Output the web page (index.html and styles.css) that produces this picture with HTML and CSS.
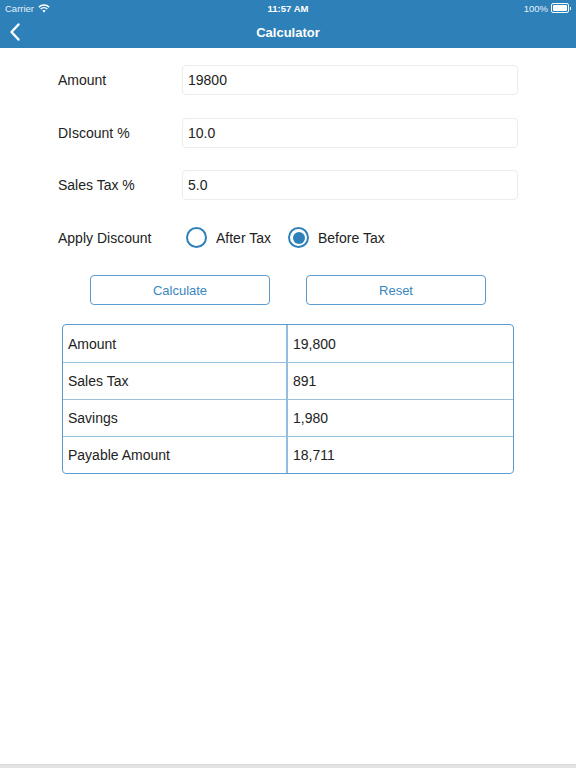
FILE: index.html
```html
<!DOCTYPE html>
<html lang="en">
<head>
    <meta charset="UTF-8">
    <meta name="viewport" content="width=device-width, initial-scale=1.0">
    <title>Calculator</title>
    <link rel="stylesheet" href="styles.css">
</head>
<body>
    <div class="screen">
        <div class="header">
            <div class="status-bar">
                <div class="status-left">
                    Carrier
                    <svg class="wifi" width="12" height="9" viewBox="0 0 12 9">
                        <path d="M6 8.6 L4.3 6.8 A2.5 2.5 0 0 1 7.7 6.8 Z" fill="#fff"/>
                        <path d="M2.6 5.1 A4.9 4.9 0 0 1 9.4 5.1" stroke="#fff" stroke-width="1.4" fill="none"/>
                        <path d="M0.8 3.2 A7.4 7.4 0 0 1 11.2 3.2" stroke="#fff" stroke-width="1.4" fill="none"/>
                    </svg>
                </div>
                <div class="status-time">11:57 AM</div>
                <div class="status-right">
                    100%
                    <span class="battery"><span class="battery-fill"></span></span>
                    <span class="battery-nub"></span>
                </div>
            </div>
            <div class="nav-bar">
                <svg class="back" width="12" height="18" viewBox="0 0 12 18">
                    <path d="M9.5 1.5 L2.5 9 L9.5 16.5" stroke="#fff" stroke-width="2.4" fill="none" stroke-linecap="round" stroke-linejoin="round"/>
                </svg>
                <div class="nav-title">Calculator</div>
            </div>
        </div>

        <div class="content">
            <div class="form-row">
                <label class="form-label">Amount</label>
                <input class="form-input" type="text" value="19800">
            </div>
            <div class="form-row">
                <label class="form-label">DIscount %</label>
                <input class="form-input" type="text" value="10.0">
            </div>
            <div class="form-row">
                <label class="form-label">Sales Tax %</label>
                <input class="form-input" type="text" value="5.0">
            </div>
            <div class="form-row">
                <label class="form-label">Apply Discount</label>
                <div class="radio-group">
                    <div class="radio-item">
                        <span class="radio"></span>
                        After Tax
                    </div>
                    <div class="radio-item">
                        <span class="radio checked"></span>
                        Before Tax
                    </div>
                </div>
            </div>

            <div class="buttons">
                <button class="btn">Calculate</button>
                <button class="btn">Reset</button>
            </div>

            <table class="results">
                <tr><td>Amount</td><td>19,800</td></tr>
                <tr><td>Sales Tax</td><td>891</td></tr>
                <tr><td>Savings</td><td>1,980</td></tr>
                <tr><td>Payable Amount</td><td>18,711</td></tr>
            </table>
        </div>

        <div class="bottom-bar"></div>
    </div>
</body>
</html>
```

FILE: styles.css
```css
body {
    margin: 0;
    font-family: "Liberation Sans", Arial, sans-serif;
    color: #222;
    background: #fff;
}
.screen {
    height: 768px;
    display: flex;
    flex-direction: column;
}
.header {
    background-color: #2e80b9;
    color: #fff;
}
.status-bar {
    height: 16px;
    display: flex;
    align-items: center;
    justify-content: space-between;
    padding: 0 5px;
    font-size: 9.5px;
}
.status-left {
    display: flex;
    align-items: center;
    gap: 4px;
    width: 120px;
    color: #e6f0f8;
}
.status-time {
    font-weight: bold;
}
.status-right {
    width: 120px;
    display: flex;
    align-items: center;
    justify-content: flex-end;
    color: #e6f0f8;
}
.battery {
    display: inline-block;
    width: 14px;
    height: 6px;
    border: 1px solid #fff;
    border-radius: 2px;
    margin-left: 3px;
    padding: 1px;
}
.battery-fill {
    display: block;
    width: 100%;
    height: 100%;
    background: #fff;
    border-radius: 1px;
}
.battery-nub {
    display: inline-block;
    width: 1px;
    height: 3px;
    background: #fff;
    margin-left: 1px;
}
.nav-bar {
    height: 32px;
    position: relative;
    display: flex;
    align-items: center;
    justify-content: center;
}
.back {
    position: absolute;
    left: 9px;
    top: 7px;
}
.nav-title {
    font-size: 13px;
    font-weight: bold;
}
.content {
    flex: 1;
    padding: 17px 58px 0 58px;
}
.form-row {
    display: flex;
    align-items: center;
    height: 30px;
    margin-bottom: 22.5px;
}
.form-label {
    width: 124px;
    font-size: 14px;
    flex-shrink: 0;
}
.form-input {
    flex: 1;
    height: 30px;
    box-sizing: border-box;
    border: 1px solid #ececec;
    border-radius: 4px;
    padding: 0 5px;
    font-family: inherit;
    font-size: 14px;
    color: #222;
    outline: none;
}
.radio-group {
    display: flex;
    align-items: center;
    margin-left: 4px;
    gap: 17px;
    font-size: 14px;
}
.radio-item {
    display: flex;
    align-items: center;
    gap: 9px;
}
.radio {
    width: 21px;
    height: 21px;
    box-sizing: border-box;
    border: 2.5px solid #2e80b9;
    border-radius: 50%;
    padding: 2.5px;
}
.radio.checked::after {
    content: "";
    display: block;
    width: 100%;
    height: 100%;
    border-radius: 50%;
    background: #2e80b9;
}
.buttons {
    display: flex;
    justify-content: center;
    gap: 36px;
    margin-top: 0;
    margin-bottom: 19px;
}
.btn {
    width: 180px;
    height: 30px;
    background: #fff;
    border: 1px solid #5c9bcf;
    border-radius: 4px;
    color: #3a86c0;
    font-family: inherit;
    font-size: 13px;
}
.results {
    width: 452px;
    margin: 0 auto;
    border-collapse: separate;
    border-spacing: 0;
    border: 1px solid #5c9bcf;
    border-radius: 4px;
    font-size: 14px;
}
.results td {
    width: 50%;
    height: 37px;
    padding: 0 5px;
    border-top: 1px solid #9cc2e2;
    box-sizing: border-box;
}
.results tr:first-child td {
    border-top: none;
}
.results td:first-child {
    border-right: 2px solid #93bcdf;
}
.bottom-bar {
    height: 3px;
    background: #e4e4e6;
    border-top: 1px solid #d9d9dc;
}
```
